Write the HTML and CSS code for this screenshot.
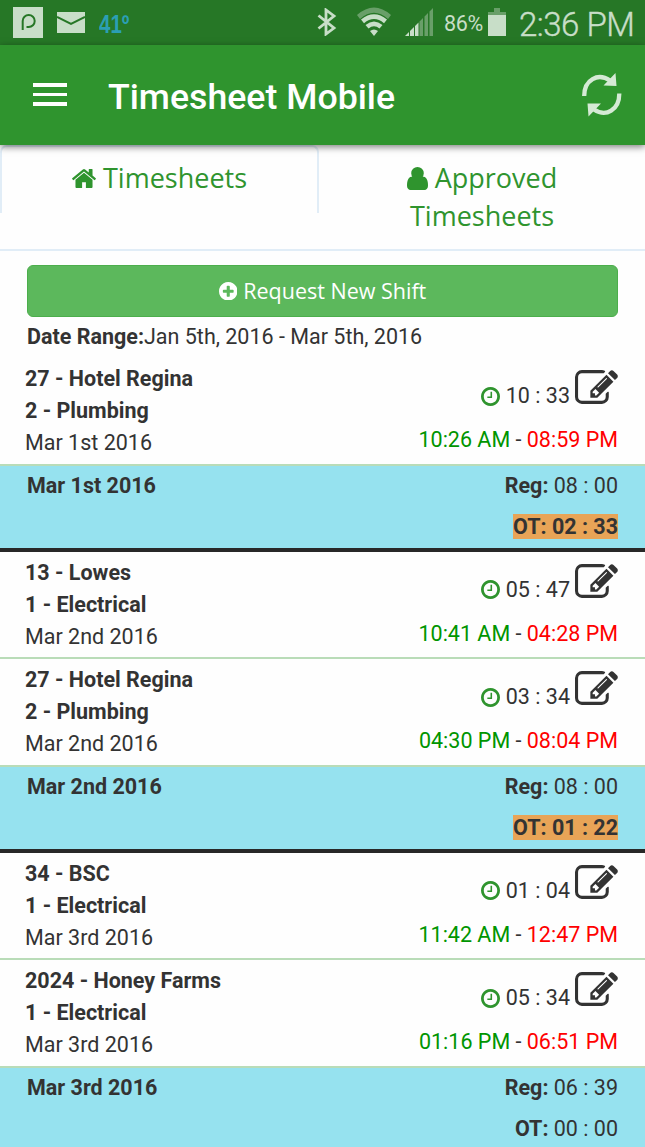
FILE: index.html
```
<!DOCTYPE html>
<html lang="en">
<head>
<meta charset="utf-8">
<title>Timesheet Mobile</title>
<link rel="stylesheet" href="styles.css">
</head>
<body>
<svg class="symbols" aria-hidden="true">
  <symbol id="edit" viewBox="0 128 1792 1408"><path d="M888 1184l116-116-152-152-116 116v56h96v96h56zm440-720q-16-16-33 1l-350 350q-17 17-1 33t33-1l350-350q17-17 1-33zm80 594v190q0 119-84.500 203.500t-203.500 84.500h-832q-119 0-203.500-84.500t-84.500-203.500v-832q0-119 84.500-203.500t203.500-84.500h832q63 0 117 25 15 7 18 23 3 17-9 29l-49 49q-14 14-32 8-23-6-45-6h-832q-66 0-113 47t-47 113v832q0 66 47 113t113 47h832q66 0 113-47t47-113v-126q0-13 9-22l64-64q15-15 35-7t20 29zm-96-738l288 288-672 672h-288v-288zm444 132l-92 92-288-288 92-92q28-28 68-28t68 28l152 152q28 28 28 68t-28 68z"/></symbol>
  <symbol id="clock" viewBox="128 128 1536 1536"><path d="M1024 544v448q0 14-9 23t-23 9h-320q-14 0-23-9t-9-23v-64q0-14 9-23t23-9h224v-352q0-14 9-23t23-9h64q14 0 23 9t9 23zm416 352q0-148-73-273t-198-198-273-73-273 73-198 198-73 273 73 273 198 198 273 73 273-73 198-198 73-273zm224 0q0 209-103 385.500t-279.500 279.500-385.500 103-385.500-103-279.500-279.500-103-385.500 103-385.500 279.500-279.500 385.500-103 385.500 103 279.500 279.500 103 385.500z"/></symbol>
</svg>

<header class="status">
  <svg class="st-app" viewBox="0 0 30 31"><path class="pale" d="M0 0h30v31H0z"/><path class="dark-line" d="M9.700 23V14a6 6 0 1 1 6 6h-2.200"/></svg>
  <svg class="st-mail" viewBox="0 0 28 21"><path class="pale" d="M0 0h28v21H0z"/><path class="dark-line" d="M0 5l14 7 14-7"/></svg>
  <span class="st-temp">41º</span>
  <span class="grow"></span>
  <svg class="st-bt" viewBox="0 0 20 28"><path class="pale-line" d="M1.500 7.500L17 20l-8 6V2l8 6L1.500 20.500"/></svg>
  <svg class="st-wifi" viewBox="0 0 34 29"><path class="dim" d="M0 8Q17-7 34 8l-3 4Q17-.5 3 12z"/><path class="pale" d="M4 12.500Q17 2 30 12.500l-3 3.700Q17 8 7 16.200zM8.500 18Q17 11 25.500 18l-3 3.500Q17 17 11.500 21.500zM13 24q4-3 8 0l-4 5z"/></svg>
  <svg class="st-signal" viewBox="0 0 28 28"><path class="pale" d="M0 28l4-4v4zM5 28v-5l4-4v9zM10 28V18l3.500-3.500V28z"/><path class="dim" d="M14.500 28V13.500l3.500-3.500v18zM19.500 28V8.500L23 5v23zM24.500 28V3.500L28 0v28z"/></svg>
  <span class="st-pct">86%</span>
  <svg class="st-batt" viewBox="0 0 18 28"><path class="dim" d="M6 0h6v4h6v3H0V4h6z"/><path class="pale" d="M0 7h18v21H0z"/></svg>
  <span class="st-time">2:36 PM</span>
</header>

<div class="appbar">
  <div class="menu"><i></i><i></i><i></i></div>
  <h1>Timesheet Mobile</h1>
  <svg class="refresh" viewBox="0 0 40 44"><path class="mint-line" d="M2.200 23C2.200 6.500 16 -.5 28 7.500M37.300 20.500C37.300 37 24 44.500 12 36.500"/><path class="mint" d="M21.500 12.500L33.500 0l1 13zM5.500 30.500h13.500L6.500 43.500z"/></svg>
</div>

<nav class="tabs">
  <div class="tab active"><svg class="home" viewBox="90 253 1612 1283"><path d="M1472 992v480q0 26-19 45t-45 19h-384v-384h-256v384h-384q-26 0-45-19t-19-45v-480q0-1 .5-3t.5-3l575-474 575 474q1 2 1 6zm223-69l-62 74q-8 9-21 11h-3q-13 0-21-7l-692-577-692 577q-12 8-24 7-13-2-21-11l-62-74q-8-10-7-23.500t11-21.500l719-599q32-26 76-26t76 26l244 204v-195q0-14 9-23t23-9h192q14 0 23 9t9 23v408l219 182q10 8 11 21.500t-7 23.500z"/></svg><span>Timesheets</span></div>
  <div class="tab"><svg class="user" viewBox="256 128 1280 1408" preserveAspectRatio="none"><path d="M1536 1271q0 109-62.500 187t-150.500 78h-854q-88 0-150.500-78t-62.500-187q0-85 8.500-160.500t31.500-152 58.500-131 94-89 134.500-34.500q131 128 313 128t313-128q76 0 134.500 34.500t94 89 58.500 131 31.500 152 8.500 160.500zm-256-759q0 159-112.500 271.500t-271.500 112.500-271.500-112.500-112.500-271.500 112.500-271.500 271.500-112.500 271.500 112.500 112.500 271.500z"/></svg><span>Approved<br></span><span>Timesheets</span></div>
</nav>

<main>
  <div class="request"><svg class="plus" viewBox="128 128 1536 1536"><path d="M1344 960v-128q0-26-19-45t-45-19h-256v-256q0-26-19-45t-45-19h-128q-26 0-45 19t-19 45v256h-256q-26 0-45 19t-19 45v128q0 26 19 45t45 19h256v256q0 26 19 45t45 19h128q26 0 45-19t19-45v-256h256q26 0 45-19t19-45zm320-64q0 209-103 385.500t-279.500 279.500-385.500 103-385.500-103-279.500-279.500-103-385.500 103-385.500 279.500-279.500 385.500-103 385.500 103 279.500 279.500 103 385.500z"/></svg><span>Request New Shift</span></div>
  <p class="range"><b>Date Range:</b>Jan 5th, 2016 - Mar 5th, 2016</p>

  <section class="shift">
    <div><b>27 - Hotel Regina</b><b>2 - Plumbing</b><span>Mar 1st 2016</span></div>
    <div class="right"><div class="dur"><svg class="clock"><use href="#clock"/></svg><span>10 : 33</span><svg class="edit"><use href="#edit"/></svg></div><div class="times"><span class="in">10:26 AM</span> - <span class="out">08:59 PM</span></div></div>
  </section>
  <section class="day">
    <b>Mar 1st 2016</b>
    <div class="right"><div><b>Reg:</b> 08 : 00</div><div><b class="ot">OT: 02 : 33</b></div></div>
  </section>

  <section class="shift">
    <div><b>13 - Lowes</b><b>1 - Electrical</b><span>Mar 2nd 2016</span></div>
    <div class="right"><div class="dur"><svg class="clock"><use href="#clock"/></svg><span>05 : 47</span><svg class="edit"><use href="#edit"/></svg></div><div class="times"><span class="in">10:41 AM</span> - <span class="out">04:28 PM</span></div></div>
  </section>
  <section class="shift">
    <div><b>27 - Hotel Regina</b><b>2 - Plumbing</b><span>Mar 2nd 2016</span></div>
    <div class="right"><div class="dur"><svg class="clock"><use href="#clock"/></svg><span>03 : 34</span><svg class="edit"><use href="#edit"/></svg></div><div class="times"><span class="in">04:30 PM</span> - <span class="out">08:04 PM</span></div></div>
  </section>
  <section class="day">
    <b>Mar 2nd 2016</b>
    <div class="right"><div><b>Reg:</b> 08 : 00</div><div><b class="ot">OT: 01 : 22</b></div></div>
  </section>

  <section class="shift">
    <div><b>34 - BSC</b><b>1 - Electrical</b><span>Mar 3rd 2016</span></div>
    <div class="right"><div class="dur"><svg class="clock"><use href="#clock"/></svg><span>01 : 04</span><svg class="edit"><use href="#edit"/></svg></div><div class="times"><span class="in">11:42 AM</span> - <span class="out">12:47 PM</span></div></div>
  </section>
  <section class="shift">
    <div><b>2024 - Honey Farms</b><b>1 - Electrical</b><span>Mar 3rd 2016</span></div>
    <div class="right"><div class="dur"><svg class="clock"><use href="#clock"/></svg><span>05 : 34</span><svg class="edit"><use href="#edit"/></svg></div><div class="times"><span class="in">01:16 PM</span> - <span class="out">06:51 PM</span></div></div>
  </section>
  <section class="day">
    <b>Mar 3rd 2016</b>
    <div class="right"><div><b>Reg:</b> 06 : 39</div><div><b>OT:</b> 00 : 00</div></div>
  </section>
</main>
</body>
</html>
```
FILE: styles.css
```
* { box-sizing: border-box; }
body {
  margin: 0;
  height: 1147px;
  overflow: hidden;
  background: #fefefe;
  color: #333;
  font: 21.5px/32.2px Roboto, sans-serif;
}
svg { display: block; flex: none; }
.symbols { display: none; }
b { font-weight: 700; }
.grow { flex: 1; }

.status {
  display: flex;
  height: 45px;
  padding: 0 12px 0 13px;
  background: #267726;
  color: #c8dec8;
  line-height: 45px;
  white-space: nowrap;
}
.pale { fill: #c8dec8; }
.dim { fill: #699f69; }
.pale-line { fill: none; stroke: #c8dec8; stroke-width: 2.8; }
.dark-line { fill: none; stroke: #267726; stroke-width: 2; }
.st-app { width: 30px; height: 31px; margin-top: 7px; }
.st-mail { width: 28px; height: 21px; margin: 12px 0 0 14px; }
.st-temp { margin: 2px 0 0 14px; color: #2b9fb4; font: 700 25px/45px "Liberation Sans", sans-serif; transform: scaleX(.82); transform-origin: left; }
.st-bt { width: 20px; height: 28px; margin: 8px 20px 0 0; }
.st-wifi { width: 34px; height: 29px; margin: 7px 14px 0 0; }
.st-signal { width: 28px; height: 28px; margin: 8px 11px 0 0; }
.st-pct { width: 39px; font-size: 21.500px; letter-spacing: -.3px; margin-top: 1px; }
.st-batt { width: 18px; height: 28px; margin: 8px 13px 0 5px; }
.st-time { font-size: 33px; font-weight: 300; line-height: 49px; width: 114px; letter-spacing: -.5px; -webkit-text-stroke: .4px #c8dec8; }

.appbar {
  position: relative;
  display: flex;
  align-items: center;
  height: 100px;
  padding: 0 23px 0 33px;
  background: #2f942e;
  color: #fff;
  box-shadow: 0 2px 7px rgba(0, 0, 0, .5);
}
.menu { display: grid; gap: 6px; width: 34px; margin-top: -1px; }
.menu i { height: 3.500px; background: #fff; }
.appbar h1 { flex: 1; margin: 3px 0 0 41px; font-size: 35.700px; font-weight: 500; line-height: 48px; }
.refresh { width: 40px; height: 44px; }
.mint { fill: #d5ead5; }
.mint-line { fill: none; stroke: #d5ead5; stroke-width: 4.300; }

.tabs {
  display: flex;
  align-items: flex-start;
  height: 106px;
  border-bottom: 2px solid #e1edf7;
  color: #2f942e;
  fill: #2f942e;
  font: 27px/38px "Open Sans", "Noto Sans", sans-serif;
}
.tab { flex: 1; padding-top: 14px; text-align: center; }
.tab svg { display: inline-block; }
.tab.active { flex: none; width: 319px; height: 68px; border: 2px solid #e1edf7; border-bottom: 0; border-radius: 7px 7px 0 0; padding-top: 12px; }
.home { width: 24px; height: 19px; margin-right: 7px; }
.user { width: 21px; height: 23px; margin-right: 7px; vertical-align: -2px; }

.request {
  display: flex;
  align-items: center;
  justify-content: center;
  gap: 6px;
  height: 52px;
  margin: 14px 27px 0;
  border: 1.800px solid #4cae4c;
  border-radius: 6px;
  background: #5cb85c;
  color: #fff;
  fill: #fff;
  font-family: "Open Sans", "Noto Sans", sans-serif;
}
.plus { width: 18.500px; height: 18.500px; }
.range { height: 41.200px; margin: 0 27px; padding-top: 4px; }

.shift, .day { display: flex; justify-content: space-between; padding: 0 27px; white-space: pre; }
.shift { height: 107.500px; padding-left: 25px; padding-top: 4.900px; border-bottom: 2px solid #b9dcb8; }
.shift > div:first-child { display: grid; grid-auto-rows: 32.200px; }
.dur { display: flex; justify-content: flex-end; align-items: flex-start; height: 46px; padding-top: 7px; }
.dur span { margin: -8px 5px 0 5.500px; line-height: 68px; height: 46px; }
.clock { width: 19px; height: 19px; margin-top: 16.500px; fill: #2f942e; }
.edit { width: 43px; height: 34px; fill: #333; }
.right { text-align: right; }
.times { line-height: 62px; height: 48px; }
.in { color: #009500; }
.out { color: #f00; }
.day { height: 86px; border-bottom: 4px solid #282828; background: #96e2ef; line-height: 41.200px; }
.day > * { margin-top: -.9px; }
.ot { background: #e8a457; }
```
